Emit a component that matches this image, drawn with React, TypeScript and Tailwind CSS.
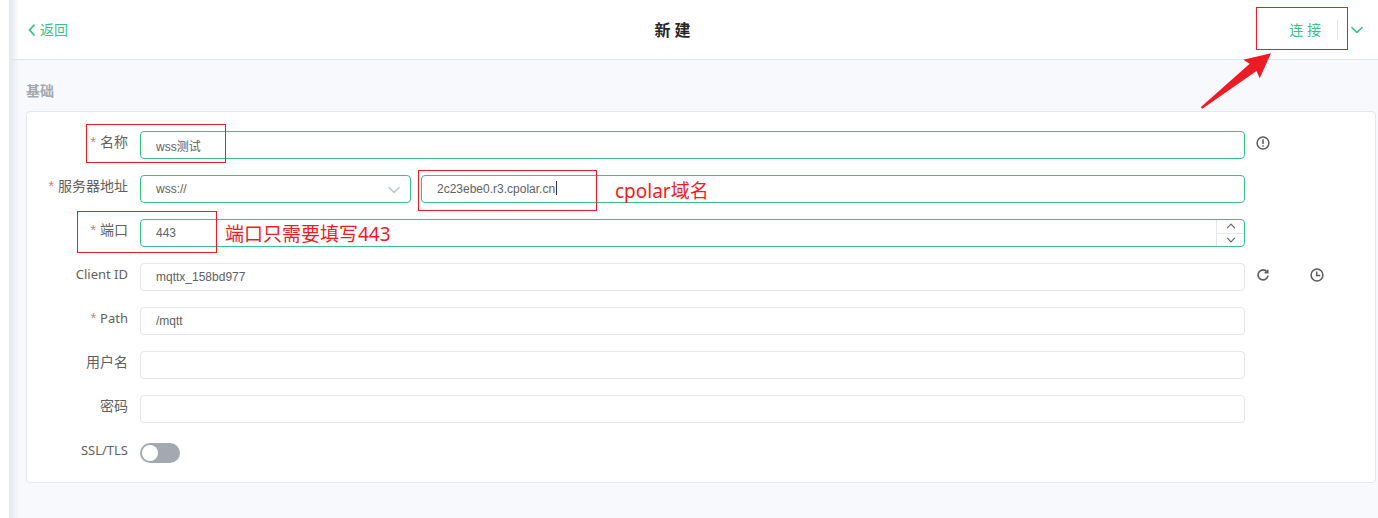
import type { ReactNode } from "react";

const labelFont = "font-['Noto_Sans','Noto_Sans_CJK_SC',sans-serif]";
const inputFont = "font-['Liberation_Sans','Noto_Sans_CJK_SC',sans-serif]";
const inputBase = `block h-7 w-full rounded border bg-white px-[15px] text-xs text-[#616161] outline-none ${inputFont}`;
const active = "border-[#34c388]";
const idle = "border-[#e4e7f0]";

function Chevron({ d, className, width = 1.6 }: { d: string; className?: string; width?: number }) {
  return (
    <svg viewBox="0 0 14 14" className={className} fill="none" stroke="currentColor" strokeWidth={width} strokeLinecap="round" strokeLinejoin="round" aria-hidden="true">
      <path d={d} />
    </svg>
  );
}

const DOWN = "M2 4.500l5 5 5-5";
const UP = "M2 9.500l5-5 5 5";
const LEFT = "M9 2.200L4.500 7l4.500 4.800";

function WarningIcon() {
  return (
    <svg viewBox="0 0 14 14" className="size-3.5" fill="none" stroke="currentColor" strokeWidth="1.500" aria-hidden="true">
      <circle cx="7" cy="7" r="5.900" />
      <path d="M7 3.300v4.700M7 9.300v1.400" />
    </svg>
  );
}

function RefreshIcon() {
  return (
    <svg viewBox="0 0 14 14" className="size-3.5" fill="none" stroke="currentColor" strokeWidth="1.600" aria-hidden="true">
      <path d="M10.900 3.700A5 5 0 1 0 12 7.600" />
      <path d="M11.700 1.700v3.100H8.600" />
    </svg>
  );
}

function ClockIcon() {
  return (
    <svg viewBox="0 0 14 14" className="size-3.5" fill="none" stroke="currentColor" strokeWidth="1.500" aria-hidden="true">
      <circle cx="7" cy="7" r="5.900" />
      <path d="M6.700 3.400v4h3.600" />
    </svg>
  );
}

function Frame({ className }: { className: string }) {
  return <span aria-hidden="true" className={`pointer-events-none absolute z-10 border border-[#ed1c24] ${className}`} />;
}

interface RowProps {
  id: string;
  label: string;
  latin?: boolean;
  required?: boolean;
  children: ReactNode;
  actions?: ReactNode;
}

function Row({ id, label, latin, required, children, actions }: RowProps) {
  return (
    <div className="relative flex min-h-7 items-start">
      <label htmlFor={id} className={`mr-3 w-[101px] shrink-0 whitespace-nowrap text-right leading-[22px] text-[#616161] ${latin ? "text-[13px]" : "text-sm"} ${labelFont}`}>
        {required && <span className="mr-1 font-['Liberation_Sans',sans-serif] text-sm leading-none text-[#f56c6c]">*</span>}
        {label}
      </label>
      <div className="min-w-0 flex-1">{children}</div>
      <div className="flex h-7 w-[130px] shrink-0 items-center gap-10 pb-1 pl-[11px] text-[#5c5c5c]">{actions}</div>
    </div>
  );
}

export default function App() {
  return (
    <div className={`flex min-h-screen bg-white ${labelFont}`}>
      <div className="w-[9px] shrink-0" />
      <div className="relative min-w-0 flex-1 bg-[#f8f9fd]">
        <header className="grid h-[60px] grid-cols-3 items-center border-b border-[#e2e4ed] bg-white pl-4 pr-3.5">
          <a href="#back" className="flex items-center gap-px text-sm text-[#34c388]">
            <Chevron d={LEFT} width={1.8} className="size-3.5" />
            返回
          </a>
          <h1 className="pr-11 text-center text-base font-bold text-[#262626]">新 建</h1>
          <div className="relative flex items-center justify-end text-[#34c388]">
            <button type="button" className="px-4 text-sm">连 接</button>
            <span className="h-5 w-px bg-[#e2e4ed]" />
            <button type="button" aria-label="更多" className="ml-3">
              <Chevron d={DOWN} className="size-3.5" />
            </button>
            <Frame className="-top-[13px] right-4 h-[43px] w-[92px]" />
            <svg viewBox="0 0 70 56" className="pointer-events-none absolute right-[93px] top-[33px] z-10 h-14 w-[70px]" aria-hidden="true">
              <path fill="#ed1c24" d="M70 .3L42.300 6.700l6.400 4L.2 53.800q-.5 2 1.500 1.700L55.500 18l3.200 7.300z" />
            </svg>
          </div>
        </header>

        <main className="pb-9 pl-[17px] pr-0.5 pt-5">
          <h2 className="text-sm font-bold leading-[22px] text-[#a2a9b0]">基础</h2>
          <form className="mt-[9px] flex flex-col gap-4 rounded border border-[#e4e7f0] bg-white pb-[15px] pt-[19px]" onSubmit={(e) => e.preventDefault()}>
            <Row id="name" label="名称" required actions={<button type="button" aria-label="提示"><WarningIcon /></button>}>
              <input id="name" defaultValue="wss测试" className={`${inputBase} ${active}`} />
              <Frame className="-top-[7px] left-[59px] h-[39px] w-[140px]" />
            </Row>

            <Row id="host" label="服务器地址" required>
              <div className="flex gap-2.5">
                <div className="relative w-[271px] shrink-0">
                  <select aria-label="协议" defaultValue="wss" className={`${inputBase} appearance-none ${active}`}>
                    <option value="wss">wss://</option>
                  </select>
                  <Chevron d={DOWN} width={1.5} className="pointer-events-none absolute right-2.5 top-2 size-3.5 text-[#c0c4cc]" />
                </div>
                <div className="relative flex-1">
                  <input id="host" defaultValue="2c23ebe0.r3.cpolar.cn" className={`${inputBase} ${active}`} />
                  <span className="absolute left-[135px] top-1.5 h-3.5 w-px bg-[#333333]" />
                  <Frame className="-left-[3px] -top-[5px] h-[41px] w-[179px]" />
                  <span className="pointer-events-none absolute left-[194px] top-0.5 text-[19px] leading-7 text-[#ed1c24]">cpolar域名</span>
                </div>
              </div>
            </Row>

            <Row id="port" label="端口" required>
              <div className="relative">
                <input id="port" inputMode="numeric" defaultValue="443" className={`${inputBase} ${active}`} />
                <div className="absolute inset-y-px right-px flex w-7 flex-col divide-y divide-[#e4e7f0] border-l border-[#e4e7f0] text-[#616161]">
                  <button type="button" aria-label="增加" className="flex flex-1 items-center justify-center">
                    <Chevron d={UP} className="size-2.5" />
                  </button>
                  <button type="button" aria-label="减少" className="flex flex-1 items-center justify-center">
                    <Chevron d={DOWN} className="size-2.5" />
                  </button>
                </div>
                <span className="pointer-events-none absolute left-[85px] top-px text-[19px] leading-7 text-[#ed1c24]">端口只需要填写443</span>
              </div>
              <Frame className="-top-2 left-[50px] h-[42px] w-[140px]" />
            </Row>

            <Row
              id="client"
              label="Client ID"
              latin
              actions={
                <>
                  <button type="button" aria-label="刷新"><RefreshIcon /></button>
                  <button type="button" aria-label="时间"><ClockIcon /></button>
                </>
              }
            >
              <input id="client" defaultValue="mqttx_158bd977" className={`${inputBase} ${idle}`} />
            </Row>

            <Row id="path" label="Path" latin required>
              <input id="path" defaultValue="/mqtt" className={`${inputBase} ${idle}`} />
            </Row>

            <Row id="user" label="用户名">
              <input id="user" className={`${inputBase} ${idle}`} />
            </Row>

            <Row id="password" label="密码">
              <input id="password" type="password" className={`${inputBase} ${idle}`} />
            </Row>

            <Row id="ssl" label="SSL/TLS" latin>
              <input
                id="ssl"
                type="checkbox"
                role="switch"
                className="mt-1 block h-5 w-10 appearance-none rounded-full bg-[#a2a9b0] p-0.5 before:block before:size-4 before:rounded-full before:bg-white checked:bg-[#34c388] checked:before:translate-x-5"
              />
            </Row>
          </form>
        </main>
        <div aria-hidden="true" className="pointer-events-none absolute inset-y-0 left-0 w-2.5 bg-linear-to-r from-[#e3e5f0] to-transparent" />
      </div>
    </div>
  );
}
